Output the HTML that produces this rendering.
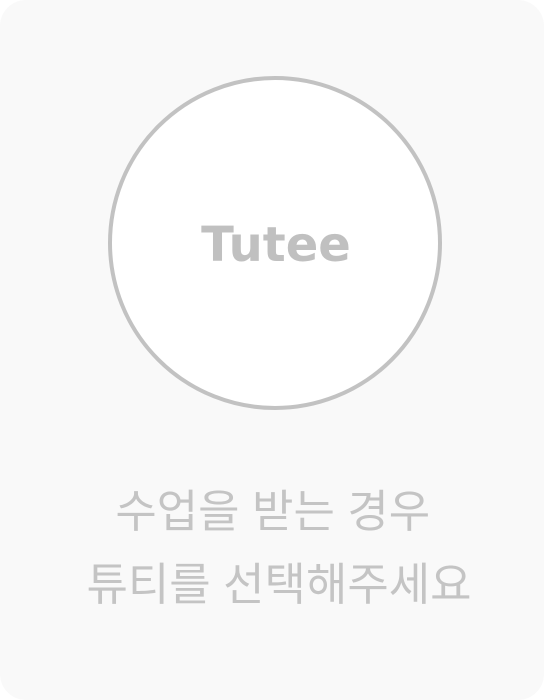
<!DOCTYPE html>
<html><head><meta charset="utf-8"><style>
html,body{margin:0;padding:0;background:#fff;}
.card{position:absolute;left:0;top:0;width:544px;height:700px;background:#f9f9f9;border-radius:26px;overflow:hidden;}
.circle{position:absolute;left:108px;top:76px;width:326px;height:326px;border:4px solid #c2c2c2;border-radius:50%;background:#fff;}
.tutee{position:absolute;left:4px;width:544px;top:210px;text-align:center;font-family:"DejaVu Sans","Liberation Sans",sans-serif;font-weight:bold;font-size:48px;color:#c0c0c0;line-height:70px;}
.txt{position:absolute;left:0;width:558px;top:475px;text-align:center;font-family:"Liberation Sans","Noto Sans CJK KR",sans-serif;font-size:45px;line-height:73px;color:#c4c4c4;white-space:pre;}
</style></head><body>
<div class="card">
<div class="circle"></div>
<div class="tutee">Tutee</div>
<div class="txt">수업을 받는 경우 
튜티를 선택해주세요</div>
</div>
</body></html>
